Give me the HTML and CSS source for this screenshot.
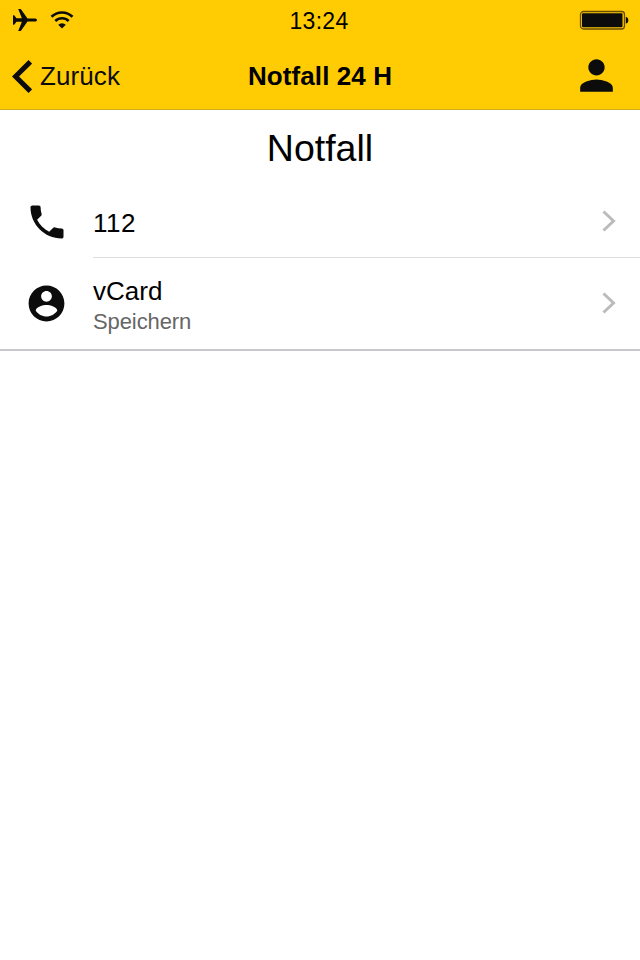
FILE: index.html
```html
<!DOCTYPE html>
<html lang="de">
<head>
<meta charset="UTF-8">
<meta name="viewport" content="width=device-width, initial-scale=1.0">
<title>Notfall 24 H</title>
<link rel="stylesheet" href="styles.css">
</head>
<body>
<header class="header">
    <div class="statusbar">
        <div class="status-left">
            <svg class="plane" viewBox="0 0 24 22"><path d="M24 11c0-1-1-1.600-2.500-1.600h-7L7.800 0H5.200l3.700 9.300H3.500L1.200 6.200H0v9.600h1.200l2.300-3.100h5.400L5.200 22h2.600l6.700-9.400h7c1.500 0 2.500-.6 2.500-1.600z"/></svg>
            <svg class="wifi" viewBox="0 0 24 18">
                <path d="M1.500 5.800a15 15 0 0 1 21 0M5.300 10a9.500 9.500 0 0 1 13.400 0" fill="none" stroke="#0c0c0c" stroke-width="2.700"/>
                <path d="M8.200 13.700a5.500 5.500 0 0 1 7.600 0L12 17.600z"/>
            </svg>
        </div>
        <div class="clock">13:24</div>
        <div class="status-right">
            <svg class="battery" viewBox="0 0 50 20">
                <rect x="1.500" y="1.500" width="44" height="17.500" rx="3" fill="none" stroke="#6b4c00" stroke-width="1.300"/>
                <rect x="3" y="3.300" width="40.500" height="14" rx="1"/>
                <path d="M46.800 7c1.700 0 2.500 1.300 2.500 3.200s-.8 3.200-2.500 3.200z"/>
            </svg>
        </div>
    </div>
    <div class="navbar">
        <a class="back" href="#">
            <svg class="back-arrow" viewBox="0 0 20 33"><path d="M18.300 1.800L3.500 16.500l14.800 14.700" fill="none" stroke="#0c0c0c" stroke-width="5"/></svg>
            <span>Zurück</span>
        </a>
        <div class="nav-title">Notfall 24 H</div>
        <a class="profile" href="#">
            <svg class="person" viewBox="0 0 24 24"><path d="M12 12c2.210 0 4-1.790 4-4s-1.790-4-4-4-4 1.790-4 4 1.790 4 4 4zm0 2c-2.670 0-8 1.340-8 4v2h16v-2c0-2.660-5.330-4-8-4z"/></svg>
        </a>
    </div>
</header>

<main class="content">
    <h1 class="title">Notfall</h1>
    <ul class="list">
        <li class="item">
            <svg class="icon phone" viewBox="0 0 24 24"><path d="M6.620 10.790c1.440 2.830 3.760 5.140 6.590 6.590l2.200-2.200c.27-.27.67-.36 1.020-.24 1.120.37 2.330.57 3.570.57.55 0 1 .45 1 1V20c0 .55-.45 1-1 1-9.390 0-17-7.610-17-17 0-.55.45-1 1-1h3.500c.55 0 1 .45 1 1 0 1.250.2 2.450.57 3.570.11.35.03.74-.25 1.020l-2.200 2.200z"/></svg>
            <div class="item-body">
                <div class="label number">112</div>
                <svg class="chevron" viewBox="0 0 14 22"><path d="M1.500 1.500L11.500 11l-10 9.500" fill="none" stroke="#bbb" stroke-width="3"/></svg>
            </div>
        </li>
        <li class="item item-tall">
            <svg class="icon account" viewBox="0 0 24 24"><path d="M12 2C6.480 2 2 6.480 2 12s4.480 10 10 10 10-4.480 10-10S17.520 2 12 2zm0 3c1.660 0 3 1.340 3 3s-1.340 3-3 3-3-1.340-3-3 1.340-3 3-3zm0 14.200c-2.500 0-4.710-1.280-6-3.220.03-1.990 4-3.080 6-3.080 1.990 0 5.970 1.090 6 3.080-1.290 1.940-3.500 3.220-6 3.220z"/></svg>
            <div class="item-body">
                <div class="text">
                    <div class="label">vCard</div>
                    <div class="sub">Speichern</div>
                </div>
                <svg class="chevron" viewBox="0 0 14 22"><path d="M1.500 1.500L11.500 11l-10 9.500" fill="none" stroke="#bbb" stroke-width="3"/></svg>
            </div>
        </li>
    </ul>
</main>
</body>
</html>
```

FILE: styles.css
```css
* {
    box-sizing: border-box;
}

body {
    margin: 0;
    background: #fff;
    color: #000;
    font-family: "Liberation Sans", Arial, sans-serif;
}

svg {
    display: block;
    flex: none;
    fill: #0c0c0c;
}

a {
    color: #0c0c0c;
    text-decoration: none;
}

.header {
    height: 110px;
    background: #ffcc04;
    border-bottom: 1px solid #d0ab1b;
}

.statusbar,
.navbar {
    display: grid;
    grid-template-columns: 1fr auto 1fr;
    align-items: center;
}

.statusbar {
    height: 40px;
    padding: 0 11px 0 13px;
}

.status-left {
    display: flex;
    align-items: center;
    gap: 13px;
}

.status-right {
    display: flex;
    justify-content: flex-end;
}

.plane {
    width: 24px;
    height: 22px;
}

.wifi {
    width: 24px;
    height: 18px;
}

.clock {
    font-size: 23px;
    line-height: 28px;
    letter-spacing: 0.3px;
    padding: 2px 4px 0 0;
}

.battery {
    width: 50px;
    height: 20px;
}

.navbar {
    height: 69px;
    padding: 3px 12px 0;
}

.back {
    display: flex;
    align-items: center;
    gap: 8px;
    font-size: 26px;
    letter-spacing: 0.1px;
}

.back-arrow {
    width: 20px;
    height: 33px;
}

.nav-title {
    font-size: 26px;
    font-weight: bold;
    letter-spacing: 0.1px;
}

.profile {
    display: flex;
    justify-content: flex-end;
    padding: 0 7px 2px 0;
}

.person {
    width: 49px;
    height: 49px;
}

.title {
    margin: 0;
    height: 75px;
    line-height: 76px;
    font-size: 37.5px;
    font-weight: normal;
    text-align: center;
}

.list {
    margin: 0;
    padding: 0;
    list-style: none;
    border-bottom: 2px solid #c8c7cc;
}

.item {
    display: flex;
    align-items: center;
    height: 73px;
    padding-left: 24.5px;
}

.item-tall {
    height: 91px;
}

.icon {
    margin-right: 24.5px;
}

.phone {
    width: 44px;
    height: 44px;
}

.account {
    width: 43px;
    height: 43px;
    margin-left: 0.5px;
    margin-right: 25px;
}

.item-body {
    flex: 1;
    height: 100%;
    display: flex;
    align-items: center;
    justify-content: space-between;
    padding-right: 24px;
    border-bottom: 1px solid #dedede;
}

.item-tall .item-body {
    padding-bottom: 2px;
    border-bottom: none;
}

.label {
    font-size: 26px;
    line-height: 34px;
}

.number {
    padding-top: 3px;
    letter-spacing: 0.5px;
}

.text {
    padding-top: 4px;
}

.sub {
    font-size: 22px;
    line-height: 28px;
    letter-spacing: -0.1px;
    color: #666;
}

.chevron {
    width: 14px;
    height: 22px;
}
```
